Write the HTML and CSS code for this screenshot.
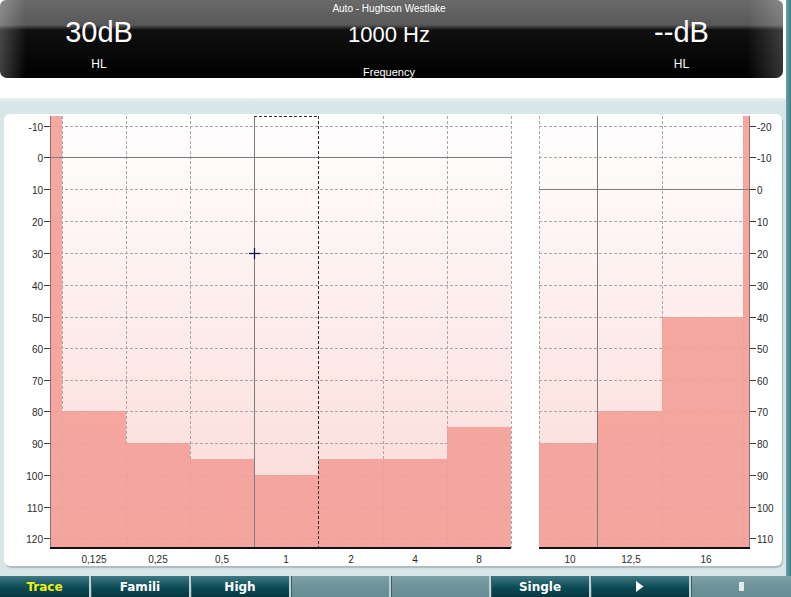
FILE: index.html
```html
<!DOCTYPE html>
<html>
<head>
<meta charset="utf-8">
<title>Audiometer</title>
<link rel="stylesheet" href="styles.css">
</head>
<body>
<div class="screen">
  <div class="main">
    <div class="content">
      <header class="readout">
        <div class="col">
          <div class="big">30dB</div>
          <div class="unit">HL</div>
        </div>
        <div class="col mid">
          <div class="title">Auto - Hughson Westlake</div>
          <div class="freq">1000 Hz</div>
          <div class="cap">Frequency</div>
        </div>
        <div class="col">
          <div class="big">--dB</div>
          <div class="unit">HL</div>
        </div>
      </header>
      <div class="workspace">
        <div class="card">
          <svg class="chart" width="778" height="452" viewBox="4 114 778 452" xmlns="http://www.w3.org/2000/svg">
            <defs>
              <linearGradient id="bg" gradientUnits="userSpaceOnUse" x1="0" y1="116" x2="0" y2="548">
                <stop offset="0" stop-color="#ffffff"/>
                <stop offset="1" stop-color="#fbd8d5"/>
              </linearGradient>
            </defs>
            <rect x="50" y="116" width="461" height="432" fill="url(#bg)"/>
            <rect x="539" y="116" width="211" height="432" fill="url(#bg)"/>

            <g class="grid">
              <line x1="50" x2="511" y1="126.5" y2="126.5"/>
              <line x1="50" x2="511" y1="189.5" y2="189.5"/>
              <line x1="50" x2="511" y1="221.5" y2="221.5"/>
              <line x1="50" x2="511" y1="253.5" y2="253.5"/>
              <line x1="50" x2="511" y1="285.5" y2="285.5"/>
              <line x1="50" x2="511" y1="317.5" y2="317.5"/>
              <line x1="50" x2="511" y1="348.5" y2="348.5"/>
              <line x1="50" x2="511" y1="380.5" y2="380.5"/>
              <line x1="50" x2="511" y1="411.5" y2="411.5"/>
              <line x1="50" x2="511" y1="443.5" y2="443.5"/>
              <line x1="50" x2="511" y1="475.5" y2="475.5"/>
              <line x1="50" x2="511" y1="507.5" y2="507.5"/>
              <line x1="50" x2="511" y1="538.5" y2="538.5"/>
              <line x1="539" x2="750" y1="126.5" y2="126.5"/>
              <line x1="539" x2="750" y1="157.5" y2="157.5"/>
              <line x1="539" x2="750" y1="221.5" y2="221.5"/>
              <line x1="539" x2="750" y1="253.5" y2="253.5"/>
              <line x1="539" x2="750" y1="285.5" y2="285.5"/>
              <line x1="539" x2="750" y1="317.5" y2="317.5"/>
              <line x1="539" x2="750" y1="348.5" y2="348.5"/>
              <line x1="539" x2="750" y1="380.5" y2="380.5"/>
              <line x1="539" x2="750" y1="411.5" y2="411.5"/>
              <line x1="539" x2="750" y1="443.5" y2="443.5"/>
              <line x1="539" x2="750" y1="475.5" y2="475.5"/>
              <line x1="539" x2="750" y1="507.5" y2="507.5"/>
              <line x1="539" x2="750" y1="538.5" y2="538.5"/>
              <line x1="62.5" x2="62.5" y1="116" y2="548"/>
              <line x1="126.5" x2="126.5" y1="116" y2="548"/>
              <line x1="190.5" x2="190.5" y1="116" y2="548"/>
              <line x1="383.5" x2="383.5" y1="116" y2="548"/>
              <line x1="447.5" x2="447.5" y1="116" y2="548"/>
              <line x1="511.5" x2="511.5" y1="116" y2="548"/>
              <line x1="539.5" x2="539.5" y1="116" y2="548"/>
              <line x1="662.5" x2="662.5" y1="116" y2="548"/>
              <line x1="743.5" x2="743.5" y1="116" y2="548"/>
            </g>

            <g class="fill">
              <rect x="62" y="411" width="64" height="137"/>
              <rect x="126" y="443" width="64" height="105"/>
              <rect x="190" y="459" width="64" height="89"/>
              <rect x="254" y="475" width="64" height="73"/>
              <rect x="318" y="459" width="65" height="89"/>
              <rect x="383" y="459" width="64" height="89"/>
              <rect x="447" y="427" width="64" height="121"/>
              <rect x="539" y="443" width="58" height="105"/>
              <rect x="597" y="411" width="65" height="137"/>
              <rect x="662" y="317" width="81" height="231"/>
              <rect x="50" y="116" width="12" height="432"/>
              <rect x="743" y="116" width="7" height="432"/>
            </g>

            <g class="solid">
              <line x1="50" x2="511" y1="157.5" y2="157.5"/>
              <line x1="539" x2="750" y1="189.5" y2="189.5"/>
              <line x1="254.5" x2="254.5" y1="116" y2="548"/>
              <line x1="597.5" x2="597.5" y1="116" y2="548"/>
            </g>

            <g class="select">
              <line x1="254" x2="319" y1="116.5" y2="116.5"/>
              <line x1="318.5" x2="318.5" y1="116" y2="548"/>
            </g>

            <g class="cursor">
              <line x1="249" x2="260" y1="253.5" y2="253.5"/>
              <line x1="254.5" x2="254.5" y1="248" y2="259"/>
            </g>

            <g class="axis">
              <line class="edge" x1="50.5" x2="50.5" y1="116" y2="548"/>
              <line class="edge" x1="749.5" x2="749.5" y1="116" y2="548"/>
              <line x1="44" x2="50" y1="126.5" y2="126.5"/>
              <line x1="44" x2="50" y1="157.5" y2="157.5"/>
              <line x1="44" x2="50" y1="189.5" y2="189.5"/>
              <line x1="44" x2="50" y1="221.5" y2="221.5"/>
              <line x1="44" x2="50" y1="253.5" y2="253.5"/>
              <line x1="44" x2="50" y1="285.5" y2="285.5"/>
              <line x1="44" x2="50" y1="317.5" y2="317.5"/>
              <line x1="44" x2="50" y1="348.5" y2="348.5"/>
              <line x1="44" x2="50" y1="380.5" y2="380.5"/>
              <line x1="44" x2="50" y1="411.5" y2="411.5"/>
              <line x1="44" x2="50" y1="443.5" y2="443.5"/>
              <line x1="44" x2="50" y1="475.5" y2="475.5"/>
              <line x1="44" x2="50" y1="507.5" y2="507.5"/>
              <line x1="44" x2="50" y1="538.5" y2="538.5"/>
              <line x1="750" x2="756" y1="126.5" y2="126.5"/>
              <line x1="750" x2="756" y1="157.5" y2="157.5"/>
              <line x1="750" x2="756" y1="189.5" y2="189.5"/>
              <line x1="750" x2="756" y1="221.5" y2="221.5"/>
              <line x1="750" x2="756" y1="253.5" y2="253.5"/>
              <line x1="750" x2="756" y1="285.5" y2="285.5"/>
              <line x1="750" x2="756" y1="317.5" y2="317.5"/>
              <line x1="750" x2="756" y1="348.5" y2="348.5"/>
              <line x1="750" x2="756" y1="380.5" y2="380.5"/>
              <line x1="750" x2="756" y1="411.5" y2="411.5"/>
              <line x1="750" x2="756" y1="443.5" y2="443.5"/>
              <line x1="750" x2="756" y1="475.5" y2="475.5"/>
              <line x1="750" x2="756" y1="507.5" y2="507.5"/>
              <line x1="750" x2="756" y1="538.5" y2="538.5"/>
            </g>
            <g class="baseline">
              <line x1="50" x2="511" y1="548" y2="548"/>
              <line x1="539" x2="750" y1="548" y2="548"/>
            </g>

            <g class="lbl lbl-left">
              <text x="43" y="130.5">-10</text>
              <text x="43" y="161.5">0</text>
              <text x="43" y="193.5">10</text>
              <text x="43" y="225.5">20</text>
              <text x="43" y="257.5">30</text>
              <text x="43" y="289.5">40</text>
              <text x="43" y="321.5">50</text>
              <text x="43" y="352.5">60</text>
              <text x="43" y="384.5">70</text>
              <text x="43" y="415.5">80</text>
              <text x="43" y="447.5">90</text>
              <text x="43" y="479.5">100</text>
              <text x="43" y="511.5">110</text>
              <text x="43" y="542.5">120</text>
            </g>
            <g class="lbl lbl-right">
              <text x="757" y="130.5">-20</text>
              <text x="757" y="161.5">-10</text>
              <text x="757" y="193.5">0</text>
              <text x="757" y="225.5">10</text>
              <text x="757" y="257.5">20</text>
              <text x="757" y="289.5">30</text>
              <text x="757" y="321.5">40</text>
              <text x="757" y="352.5">50</text>
              <text x="757" y="384.5">60</text>
              <text x="757" y="415.5">70</text>
              <text x="757" y="447.5">80</text>
              <text x="757" y="479.5">90</text>
              <text x="757" y="511.5">100</text>
              <text x="757" y="542.5">110</text>
            </g>
            <g class="lbl lbl-bottom">
              <text x="94" y="563">0,125</text>
              <text x="158" y="563">0,25</text>
              <text x="222" y="563">0,5</text>
              <text x="286" y="563">1</text>
              <text x="351" y="563">2</text>
              <text x="415" y="563">4</text>
              <text x="479" y="563">8</text>
              <text x="570" y="563">10</text>
              <text x="631" y="563">12,5</text>
              <text x="706" y="563">16</text>
            </g>
          </svg>
        </div>
      </div>
    </div>
    <div class="strip"></div>
  </div>
  <nav class="toolbar">
    <button class="tb dark first on">Trace</button>
    <button class="tb dark">Famili</button>
    <button class="tb dark">High</button>
    <button class="tb light"></button>
    <button class="tb light"></button>
    <button class="tb dark">Single</button>
    <button class="tb dark"><svg class="ico" width="8" height="11" viewBox="0 0 8 11"><path d="M0 0 L7.5 5.5 L0 11 Z" fill="#ffffff"/></svg></button>
    <button class="tb light last"><span class="stop"></span></button>
  </nav>
</div>
</body>
</html>
```

FILE: styles.css
```css
html, body {
  margin: 0;
  padding: 0;
}
body {
  width: 791px;
  height: 597px;
  overflow: hidden;
  background: #ffffff;
  font-family: "Liberation Sans", Arial, sans-serif;
}
.screen {
  display: flex;
  flex-direction: column;
  height: 597px;
}
.main {
  display: flex;
  height: 576px;
}
.content {
  width: 786px;
  display: flex;
  flex-direction: column;
  background: #ffffff;
}
.strip {
  width: 5px;
  background: linear-gradient(to right, #6aa2ac, #3f7d89);
}

/* top readout */
.readout {
  width: 783px;
  height: 78px;
  box-sizing: border-box;
  border-radius: 6px 6px 7px 7px;
  background:
    linear-gradient(to right, rgba(255,255,255,0.24) 0, rgba(255,255,255,0) 26px, rgba(255,255,255,0) calc(100% - 36px), rgba(255,255,255,0.2) 100%),
    linear-gradient(to bottom, #6a6a6a 0, #585858 25px, #101010 30px, #000000 100%);
  display: grid;
  grid-template-columns: 198px 1fr 203px;
  color: #ffffff;
}
.col {
  display: flex;
  flex-direction: column;
  align-items: center;
}
.big {
  font-size: 29px;
  line-height: 29px;
  margin-top: 18px;
}
.unit {
  font-size: 12px;
  line-height: 12px;
  margin-top: 11px;
}
.title {
  font-size: 10px;
  line-height: 10px;
  margin-top: 4px;
}
.freq {
  font-size: 22px;
  line-height: 22px;
  margin-top: 10px;
}
.cap {
  font-size: 11px;
  line-height: 11px;
  margin-top: 21px;
}

/* workspace + card */
.workspace {
  margin-top: 20px;
  flex: 1;
  background: linear-gradient(to bottom, #e9f1f2 0, #d8e6e8 4px, #d8e6e8 100%);
  padding: 16px 4px 0 4px;
}
.card {
  width: 778px;
  height: 452px;
  background: #ffffff;
  border-radius: 6px;
  box-shadow: 1px 2px 1px rgba(90, 110, 115, 0.35);
}
.chart {
  display: block;
}
.grid line {
  stroke: #a6a6a6;
  stroke-width: 1;
  stroke-dasharray: 3 2;
}
.fill rect {
  fill: #f39f98;
  fill-opacity: 0.9;
}
.solid line {
  stroke: #7c7c7c;
  stroke-width: 1;
}
.select line {
  stroke: #2a2a2a;
  stroke-width: 1;
  stroke-dasharray: 3 2;
}
.cursor line {
  stroke: #14144a;
  stroke-width: 1.3;
}
.axis line {
  stroke: #3a3a3a;
  stroke-width: 1;
}
.axis line.edge {
  stroke: #9a6a68;
}
.baseline line {
  stroke: #111111;
  stroke-width: 2;
}
.lbl text {
  font-family: "Liberation Sans", Arial, sans-serif;
  font-size: 10px;
  fill: #2a2a2a;
}
.lbl-left text {
  text-anchor: end;
}
.lbl-right text {
  text-anchor: start;
}
.lbl-bottom text {
  text-anchor: middle;
}

/* toolbar */
.toolbar {
  display: flex;
  height: 21px;
  background: #d8e6e8;
}
.tb {
  width: 100px;
  height: 21px;
  margin: 0;
  padding: 0;
  border: 0;
  border-left: 2px solid #c2d2d4;
  box-shadow: inset 1px 0 0 #3c5f66;
  font-family: "DejaVu Sans", Verdana, sans-serif;
  font-weight: bold;
  font-size: 12px;
  color: #ffffff;
  display: flex;
  align-items: center;
  justify-content: center;
}
.tb.first {
  width: 89px;
  border-left: 0;
  box-shadow: none;
}
.tb.last {
  flex: 1;
}
.tb.dark {
  background: linear-gradient(to bottom, #3f7a84 0, #22606a 30%, #0c4a54 55%, #063841 100%);
}
.tb.light {
  background: linear-gradient(to bottom, #7fa2a8 0, #6e939a 45%, #678d94 100%);
}
.tb.on {
  color: #f2f20c;
}
.ico {
  display: block;
}
.stop {
  display: block;
  width: 5px;
  height: 9px;
  background: #e3eaea;
}
```
